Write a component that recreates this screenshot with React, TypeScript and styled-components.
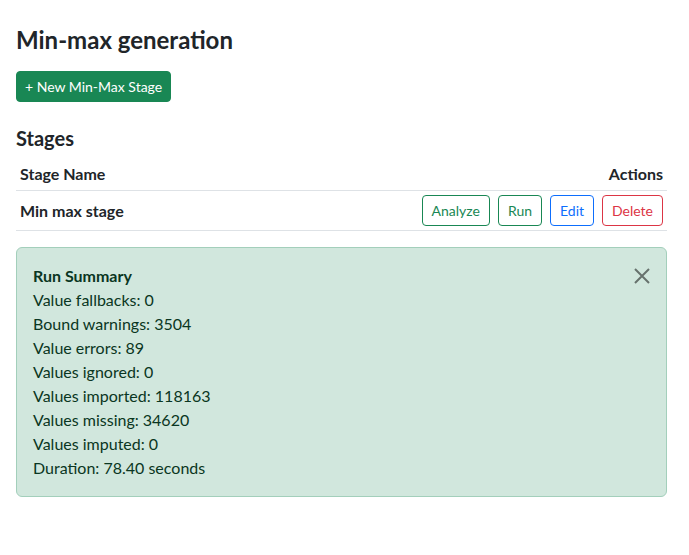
import React from 'react';
import styled, {createGlobalStyle, css} from 'styled-components';

const GlobalStyle = createGlobalStyle`
  html, body {
    margin: 0;
    padding: 0;
    background: #fff;
  }
  body {
    font-family: Lato, "Noto Sans", "Liberation Sans", sans-serif;
    font-size: 16px;
    line-height: 1.5;
    color: #212529;
  }
  * {
    box-sizing: border-box;
  }
`;

const Page = styled.main`
  padding: 25px 22px 16px 16px;
`;

const Title = styled.h2`
  margin: 0 0 17px;
  font-size: 24px;
  font-weight: 700;
  line-height: 29px;
  color: #212529;
`;

const PrimaryButton = styled.button`
  display: inline-block;
  height: 31px;
  padding: 0 8px;
  font-family: inherit;
  font-size: 14px;
  line-height: 29px;
  color: #fff;
  background: #198754;
  border: 1px solid #198754;
  border-radius: 4px;
  cursor: pointer;
`;

const Section = styled.h3`
  margin: 24px 0 8px;
  font-size: 20px;
  font-weight: 700;
  line-height: 24px;
`;

const Table = styled.table`
  width: 100%;
  border-collapse: collapse;
  margin-bottom: 16px;
`;

const Cell = styled.td<{$align?: 'left' | 'right'}>`
  padding: 4px;
  text-align: ${p => p.$align ?? 'left'};
  font-weight: 700;
  border-bottom: 1px solid #dee2e6;
  vertical-align: middle;
`;

const HeadCell = styled.th<{$align?: 'left' | 'right'}>`
  padding: 4px;
  text-align: ${p => p.$align ?? 'left'};
  font-weight: 700;
  border-bottom: 1px solid #dee2e6;
`;

const Actions = styled.div`
  display: flex;
  justify-content: flex-end;
  gap: 8px;
`;

const tones = {
  success: '#198754',
  primary: '#0d6efd',
  danger: '#dc3545',
};

const OutlineButton = styled.button<{$tone: keyof typeof tones}>`
  height: 31px;
  padding: 0 9px;
  font-family: inherit;
  font-size: 14px;
  line-height: 29px;
  background: #fff;
  border-radius: 4px;
  cursor: pointer;
  ${p => css`
    color: ${tones[p.$tone]};
    border: 1px solid ${tones[p.$tone]};
  `}
`;

const Alert = styled.section`
  position: relative;
  padding: 16px 48px 16px 16px;
  background: #d1e7dd;
  border: 1px solid #a3cfbb;
  border-radius: 6px;
  color: #0a3622;
`;

const AlertTitle = styled.div`
  font-weight: 700;
`;

const Line = styled.div``;

const CloseButton = styled.button`
  position: absolute;
  top: 0;
  right: 0;
  padding: 20px 16px;
  background: transparent;
  border: 0;
  opacity: 0.5;
  cursor: pointer;
  line-height: 0;
`;

const summary = [
  'Value fallbacks: 0',
  'Bound warnings: 3504',
  'Value errors: 89',
  'Values ignored: 0',
  'Values imported: 118163',
  'Values missing: 34620',
  'Values imputed: 0',
  'Duration: 78.40 seconds',
];

export default function App() {
  return (
    <>
      <GlobalStyle />
      <Page>
        <Title>Min-max generation</Title>
        <PrimaryButton>+ New Min-Max Stage</PrimaryButton>
        <Section>Stages</Section>
        <Table>
          <thead>
            <tr>
              <HeadCell>Stage Name</HeadCell>
              <HeadCell $align="right">Actions</HeadCell>
            </tr>
          </thead>
          <tbody>
            <tr>
              <Cell>Min max stage</Cell>
              <Cell $align="right">
                <Actions>
                  <OutlineButton $tone="success">Analyze</OutlineButton>
                  <OutlineButton $tone="success">Run</OutlineButton>
                  <OutlineButton $tone="primary">Edit</OutlineButton>
                  <OutlineButton $tone="danger">Delete</OutlineButton>
                </Actions>
              </Cell>
            </tr>
          </tbody>
        </Table>
        <Alert>
          <AlertTitle>Run Summary</AlertTitle>
          {summary.map(s => (
            <Line key={s}>{s}</Line>
          ))}
          <CloseButton aria-label="Close">
            <svg width="16" height="16" viewBox="0 0 16 16">
              <path d="M1 1L15 15M15 1L1 15" stroke="#000" strokeWidth="2" />
            </svg>
          </CloseButton>
        </Alert>
      </Page>
    </>
  );
}
